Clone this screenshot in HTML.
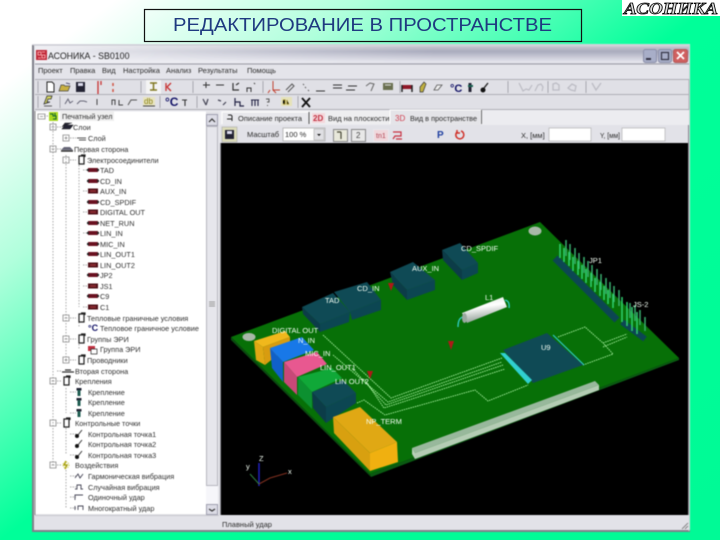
<!DOCTYPE html>
<html><head><meta charset="utf-8"><style>
html,body{margin:0;padding:0;width:720px;height:540px;overflow:hidden}
body{background:linear-gradient(to bottom right,#fff 0%,#fff 8%,#b0ffdc 25%,#00ff99 50%,#00fa96 100%)}
svg{position:absolute;left:0;top:0;display:block}
text{font-family:"Liberation Sans",sans-serif}
.m{font-size:7.500px;fill:#2c2c2c}
.tr{font-size:7.300px;fill:#303030}
.l{font-size:7.500px;fill:#f4fff4}
.s{stroke:#a8a8b0;stroke-width:1}
</style></head><body>
<svg width="720" height="540" viewBox="0 0 720 540" xmlns="http://www.w3.org/2000/svg">
<defs>
<linearGradient id="tb" x1="0" y1="0" x2="0" y2="1"><stop offset="0" stop-color="#c8c8d0"/><stop offset=".3" stop-color="#a9abbd"/><stop offset=".9" stop-color="#e6e6ee"/><stop offset="1" stop-color="#d0d0d8"/></linearGradient>
<linearGradient id="tl" x1="0" y1="0" x2="1" y2="0"><stop offset="0" stop-color="#f2f2f6" stop-opacity=".95"/><stop offset=".6" stop-color="#f2f2f6" stop-opacity=".35"/><stop offset="1" stop-color="#f2f2f6" stop-opacity="0"/></linearGradient>
<linearGradient id="cy" x1="0" y1="0" x2=".25" y2="1"><stop offset="0" stop-color="#d8e2d8"/><stop offset=".45" stop-color="#fff"/><stop offset="1" stop-color="#8e9c94"/></linearGradient>
<g id="cn"><rect x="0" y="-2" width="10" height="4" fill="#6a1020"/><rect x="-1" y="-1" width="2" height="2" fill="#222"/><rect x="9" y="-1" width="2" height="2" fill="#222"/></g>
<g id="cm"><rect x="0" y="-2.500" width="10" height="5" fill="#501018"/><rect x="2" y="-1" width="6" height="2" fill="#8a2a30"/></g>
<g id="fx"><path d="M0 -4h5v8H0zM2 -5h4v2" fill="#fff" stroke="#222" stroke-width="1.200"/></g>
<g id="sc"><rect x="-2.500" y="-4" width="5" height="2.500" fill="#223"/><rect x="-1.500" y="-2" width="3" height="6" fill="#1e5c50"/></g>
<g id="pt"><circle cx="-2" cy="2" r="2" fill="#111"/><path d="M-1 1L3 -4" stroke="#333" fill="none"/></g>
</defs>

<!-- Title -->
<g style="filter:blur(.25px)">
<rect x="144.500" y="9.500" width="437" height="32" fill="none" stroke="#111" stroke-width="1.200"/>
<text x="173" y="31" font-size="18" fill="#1f3a80" textLength="379" lengthAdjust="spacingAndGlyphs">РЕДАКТИРОВАНИЕ В ПРОСТРАНСТВЕ</text>
</g>

<!-- Logo -->
<rect x="622" y="0" width="98" height="16" fill="#fff"/>
<text x="624" y="14" font-size="17" font-weight="bold" font-style="italic" textLength="94" lengthAdjust="spacingAndGlyphs" style="font-family:'Liberation Serif',serif" fill="#ddd" stroke="#000" stroke-width=".8">АСОНИКА</text>

<g style="filter:blur(.45px)">
<!-- Window -->
<rect x="32" y="44" width="658" height="488" fill="#e3e3e8"/>
<path d="M33 45V531H690" fill="none" stroke="#80808a" stroke-width="2"/>
<path d="M33 45H689V531" fill="none" stroke="#c8c8d0" stroke-width="1"/>
<rect x="35" y="46" width="654" height="18" fill="url(#tb)"/>
<rect x="35" y="46" width="400" height="18" fill="url(#tl)"/>
<rect x="36" y="50" width="11" height="10" fill="#c02838"/><path d="M38 52h3v3h-3zM42 52h3M42 55h3v3h-3zM38 58h3" stroke="#fbb" stroke-width=".8" fill="none"/>
<text x="48" y="59" font-size="8.800" fill="#222">АСОНИКА - SB0100</text>
<rect x="643.500" y="49.500" width="13" height="13" rx="2" fill="#a8aec8" stroke="#8a8ea8"/><rect x="646" y="58" width="5" height="2" fill="#334"/>
<rect x="658.500" y="49.500" width="13" height="13" rx="2" fill="#a8aec8" stroke="#8a8ea8"/><rect x="661.500" y="52.500" width="7" height="7" fill="none" stroke="#334" stroke-width="1.200"/>
<rect x="673.500" y="49.500" width="14" height="13" rx="2" fill="#d06060" stroke="#b05858"/><path d="M677 52l7 7M684 52l-7 7" stroke="#fff" stroke-width="1.800"/>

<!-- Menu -->
<rect x="35" y="64" width="654" height="15" fill="#e4e4ea"/>
<path d="M35 64H689" stroke="#9a9aa4"/>
<text x="38" y="73" class="m">Проект</text><text x="70" y="73" class="m">Правка</text><text x="102" y="73" class="m">Вид</text><text x="123" y="73" class="m">Настройка</text><text x="166" y="73" class="m">Анализ</text><text x="198" y="73" class="m">Результаты</text><text x="247" y="73" class="m">Помощь</text>

<!-- Toolbars -->
<rect x="35" y="79" width="654" height="31" fill="#e0e0e6"/>
<path d="M35 79.500H689M35 94.500H689M35 109.500H689" stroke="#aeaeb6"/>
<path d="M689 79V110" stroke="#aeaeb6"/>
<path d="M38 81V93M141 81V93M193 81V93M263 81V93M400 81V93M508 81V93M548 81V93M586 81V93M38 96V108M60 96V108M160 96V108M197 96V108M298 96V108" class="s" fill="none"/>
<path d="M47 82h5l2 2v8h-7z" fill="#fff" stroke="#222"/>
<path d="M59 91l2-6h3l1 1h5l-2 5z" fill="#c8b040" stroke="#444" stroke-width=".7"/><path d="M66 83l4 1" stroke="#557" stroke-width="1"/>
<rect x="76" y="82" width="9" height="10" fill="#223"/><rect x="78" y="83" width="5" height="3" fill="#dde"/>
<path d="M98 81v13M101 81v4" stroke="#c83030" stroke-width="1.300"/><path d="M113 83v3M113 89v3" stroke="#d05040" stroke-width="1.500"/>
<rect x="146" y="80" width="15" height="14" fill="#f4f4f4"/><path d="M150 83h7M153.500 83v7M150 90h7" stroke="#807820" stroke-width="1.500"/>
<path d="M166 83v8M167 87l4-4M167 87l4 4" stroke="#c83030" stroke-width="1.300"/>
<path d="M203 85h7M206 82v6M216 85h8" stroke="#333" stroke-width="1"/>
<path d="M233 83v7h6M236 85l3-2" stroke="#333" stroke-width="1.200" fill="none"/><path d="M247 92v-4h4v4M254 83l1 1" stroke="#333" fill="none"/>
<path d="M273 81v9h7M270 90l-2 3M273 90l3 3" stroke="#c04030" stroke-width="1" fill="none"/>
<path d="M286 90l6-6 2 2-6 6M303 84l1 1M305 87l1 1M308 90l1 1" stroke="#555" stroke-width="1" fill="none"/>
<path d="M316 91h9M333 85h9M333 88h9M348 86h9M346 90h9" stroke="#333" stroke-width="1"/>
<path d="M366 86l4-3 4 1-3 7" stroke="#666" fill="none"/><rect x="383" y="83" width="10" height="7" fill="#6a7050"/><path d="M385 85h6" stroke="#ddd"/>
<rect x="402" y="85" width="10" height="4" fill="#901828"/><path d="M402 85v7M412 85v7" stroke="#222" stroke-width="1.500"/>
<path d="M420 92v-5l4-5 2 2-3 8z" fill="#c0b040" stroke="#333" stroke-width=".7"/><path d="M434 90l3-5h5l-4 5z" fill="#eee" stroke="#555" stroke-width=".8"/>
<text x="450" y="92" font-size="11" font-weight="bold" fill="#116">°C</text>
<path d="M470 83v9" stroke="#223" stroke-width="3"/><path d="M468 86h5" stroke="#186050" stroke-width="2"/>
<circle cx="483" cy="90" r="2.500" fill="#111"/><path d="M484 88l4-5" stroke="#222" stroke-width="1.400"/>
<path d="M519 83l4 8 3-2 3 1 3-5M535 91l3-6 3-1 2 3-1 4" stroke="#bcbcc4" stroke-width="1.200" fill="none"/>
<path d="M553 90v-6l3-1 3 2v5zM568 88l4-4 4 2-1 5-4-1zM592 83l4 7 5-7" stroke="#bcbcc4" stroke-width="1.300" fill="none"/>

<path d="M44 104l3-8h5l-1 3h-3l-1 3h3zM44 106h8" fill="#d8d860" stroke="#333" stroke-width=".8"/>
<path d="M65 104l3-5 2 4 3-2M77 104l3-3h4l3 1" stroke="#667" stroke-width="1" fill="none"/><path d="M97 99v6M112 105v-5h3v5M119 100v5h4" stroke="#444" stroke-width="1" fill="none"/>
<path d="M128 105l3-5h6" stroke="#555" fill="none"/>
<rect x="143" y="97" width="12" height="9" fill="#e8e4c0"/><text x="144" y="104" font-size="8" fill="#888010">db</text><path d="M143 106h12" stroke="#444"/>
<text x="165" y="106" font-size="12" font-weight="bold" fill="#116">°C</text><path d="M182 100h5M185 100v6" stroke="#333" stroke-width="1.100"/>
<path d="M203 99l3 6M208 99l-2 6M218 100l3 1M223 105l3-3" stroke="#445" stroke-width="1.200" fill="none"/>
<path d="M235 98v8M235 102h5v4h4" stroke="#224" stroke-width="1.200" fill="none"/><path d="M251 100h8M252 100v6M255 100v6M258 100v6" stroke="#224" stroke-width="1.100" fill="none"/>
<path d="M266 99h3v3h-2M267.500 105v1" stroke="#555" fill="none"/>
<rect x="281" y="97" width="11" height="9" fill="#e6e2b8"/><path d="M283 100h2v4h-2M287 100v4h2" stroke="#908020"/>
<path d="M302 98l8 9M310 98l-8 9" stroke="#111" stroke-width="1.800"/>

<!-- Tree -->
<rect x="35" y="111" width="171" height="403" fill="#fff"/>
<path d="M35 111H219V515" fill="none" stroke="#e8e8ee"/>
<path d="M35 111V515" stroke="#888"/>
<!-- scrollbar -->
<rect x="206" y="114" width="12" height="401" fill="#f6f6fa"/>
<rect x="206.500" y="114.500" width="11" height="11" fill="#dcdce6" stroke="#a0a0b0"/><path d="M209 122l3-3 3 3" stroke="#333" stroke-width="1.200" fill="none"/>
<rect x="206.500" y="126.500" width="11" height="359" fill="#e6e6ec" stroke="#b8b8c0"/>
<path d="M209 302h6M209 304h6M209 306h6" stroke="#999"/>
<rect x="206.500" y="504.500" width="11" height="10" fill="#dcdce6" stroke="#a0a0b0"/><path d="M209 509l3 2 3-2" stroke="#333" stroke-width="1.200" fill="none"/>
<!-- dotted tree lines -->
<path d="M53 122V465M66 155V360M79 165V307M66 388V413M66 428V455M66 470V508M79 322V328M79 344V350" stroke="#aaa" stroke-dasharray="1.500 1.500" fill="none"/>
<path d="M44 116H48M57 127H62M70 138H76M57 149H62M70 160H76M83 170H87M83 191H87M83 212H87M83 233H87M83 265H87M83 286H87M83 307H87M70 318H76M70 339H76M70 360H76M57 371H62M57 381H62M70 392H76M70 413H76M57 423H62M70 434H76M70 455H76M57 465H62M70 476H76M70 487H76M70 497H76M70 508H76" stroke="#aaa" stroke-dasharray="1.500 1" fill="none"/>
<path d="M38 114h7v5h-7zM40 116.500h3M50 124h6v6h-6zM51.500 127h3M50 146h6v6h-6zM51.500 149h3M63 157h6v6h-6zM63 315h6v6h-6zM64.500 318h3M63 336h6v6h-6zM64.500 339h3M63 357h6v6h-6zM64.500 360h3M66 358.500v3M50 378h6v6h-6zM51.500 381h3M50 420h6v6h-6zM50 462h6v6h-6zM51.500 465h3M63 135h6v6h-6zM64.500 138h3M66 136.500v3" stroke="#888" stroke-width=".8" fill="none"/>
<rect x="49" y="112" width="9" height="9" fill="#a8d820"/><path d="M50 114h3v2h3v3h-3M55 113v3" stroke="#163" stroke-width="1" fill="none"/>
<rect x="60" y="111" width="54" height="10" fill="#eeeeee"/>
<path d="M62 129l3-4h8l-3 4zM62 127l3-4h7" fill="#223" stroke="#222" stroke-width=".6"/>
<path d="M77 138h9M79 140h7" stroke="#555"/>
<path d="M61 150l3-3h6l3 3z" fill="#667"/><path d="M61 151h12" stroke="#222" stroke-width="1.400"/>
<use href="#fx" x="79" y="160"/><use href="#fx" x="79" y="318"/><use href="#fx" x="79" y="339"/><use href="#fx" x="79" y="360"/><use href="#fx" x="64" y="381"/><use href="#fx" x="64" y="423"/>
<use href="#cn" x="88" y="170"/><use href="#cn" x="88" y="181"/><use href="#cm" x="88" y="191"/><use href="#cn" x="88" y="202"/><use href="#cm" x="88" y="212"/><use href="#cn" x="88" y="223"/><use href="#cn" x="88" y="233"/><use href="#cn" x="88" y="244"/><use href="#cn" x="88" y="254"/><use href="#cm" x="88" y="265"/><use href="#cn" x="88" y="275"/><use href="#cm" x="88" y="286"/><use href="#cn" x="88" y="296"/><use href="#cm" x="88" y="307"/>
<text x="88" y="331" font-size="9" font-weight="bold" fill="#116">°C</text>
<rect x="88" y="346" width="7" height="5" fill="#c03040"/><rect x="91" y="349" width="6" height="5" fill="#fff" stroke="#222" stroke-width=".7"/>
<path d="M62 372h12M65 370h6" stroke="#333" stroke-width="1.200"/>
<use href="#sc" x="79" y="392"/><use href="#sc" x="79" y="402"/><use href="#sc" x="79" y="413"/>
<use href="#pt" x="79" y="434"/><use href="#pt" x="79" y="444"/><use href="#pt" x="79" y="455"/>
<path d="M66 461l-2 4h3l-2 4" stroke="#a8a010" stroke-width="1.500" fill="none"/><circle cx="66" cy="465" r="3" fill="none" stroke="#c8c840" stroke-dasharray="1 1"/>
<path d="M75 478l3-4 2 4 3-4M75 489h2v-4h4v4h2M75 500v-5h8M75 510v-4M78 510v-4h5v4" stroke="#445" stroke-width=".9" fill="none"/>

<text x="62" y="119" class="tr">Печатный узел</text>
<text x="73" y="130" class="tr">Слои</text>
<text x="88" y="141" class="tr">Слой</text>
<text x="74" y="152" class="tr">Первая сторона</text>
<text x="87" y="163" class="tr">Электросоединители</text>
<text x="100" y="173" class="tr">TAD</text>
<text x="100" y="184" class="tr">CD_IN</text>
<text x="100" y="194" class="tr">AUX_IN</text>
<text x="100" y="205" class="tr">CD_SPDIF</text>
<text x="100" y="215" class="tr">DIGITAL OUT</text>
<text x="100" y="226" class="tr">NET_RUN</text>
<text x="100" y="236" class="tr">LIN_IN</text>
<text x="100" y="247" class="tr">MIC_IN</text>
<text x="100" y="257" class="tr">LIN_OUT1</text>
<text x="100" y="268" class="tr">LIN_OUT2</text>
<text x="100" y="278" class="tr">JP2</text>
<text x="100" y="289" class="tr">JS1</text>
<text x="100" y="299" class="tr">C9</text>
<text x="100" y="310" class="tr">C1</text>
<text x="87" y="321" class="tr">Тепловые граничные условия</text>
<text x="100" y="331" class="tr">Тепловое граничное условие</text>
<text x="87" y="342" class="tr">Группы ЭРИ</text>
<text x="100" y="352" class="tr">Группа ЭРИ</text>
<text x="87" y="363" class="tr">Проводники</text>
<text x="75" y="374" class="tr">Вторая сторона</text>
<text x="75" y="384" class="tr">Крепления</text>
<text x="88" y="395" class="tr">Крепление</text>
<text x="88" y="405" class="tr">Крепление</text>
<text x="88" y="416" class="tr">Крепление</text>
<text x="75" y="426" class="tr">Контрольные точки</text>
<text x="88" y="437" class="tr">Контрольная точка1</text>
<text x="88" y="447" class="tr">Контрольная точка2</text>
<text x="88" y="458" class="tr">Контрольная точка3</text>
<text x="75" y="468" class="tr">Воздействия</text>
<text x="88" y="479" class="tr">Гармоническая вибрация</text>
<text x="88" y="490" class="tr">Случайная вибрация</text>
<text x="88" y="500" class="tr">Одиночный удар</text>
<text x="88" y="511" class="tr">Многократный удар</text>

<!-- Tabs -->
<rect x="220" y="110" width="469" height="15" fill="#ececf0"/>
<rect x="222" y="112" width="87" height="13" fill="#e8e8ec"/>
<path d="M222 124V112H309V124" stroke="#fff" fill="none"/><path d="M309 112V124" stroke="#555"/>
<rect x="310" y="111" width="80" height="13" fill="#eeeef0"/>
<rect x="312" y="113" width="13" height="10" fill="#f4d8dc"/>
<rect x="390" y="110" width="91" height="15" fill="#e4e4e8"/>
<path d="M390 124V110H481V124" stroke="#fff" fill="none"/><path d="M481.500 110V124" stroke="#666"/>
<path d="M227 119h5M228 115h3l1 1v5" stroke="#222" fill="none"/>
<text x="238" y="121" class="m">Описание проекта</text>
<text x="313" y="121" font-size="8" font-weight="bold" fill="#c03040">2D</text>
<text x="328" y="121" class="m">Вид на плоскости</text>
<text x="395" y="121" font-size="8" fill="#d04050">3D</text>
<text x="410" y="121" class="m" textLength="67" lengthAdjust="spacingAndGlyphs">Вид в пространстве</text>

<!-- Tool row -->
<rect x="220" y="125" width="469" height="18" fill="#e2e2e8"/>
<rect x="222" y="127" width="15" height="15" fill="#dcdcb8" stroke="#aaa" stroke-width=".6"/>
<rect x="225" y="130" width="9" height="9" fill="#223"/><rect x="227" y="131" width="5" height="3" fill="#dde"/>
<text x="247" y="137" class="m">Масштаб</text>
<rect x="283" y="128" width="42" height="13" fill="#fff" stroke="#999" stroke-width=".6"/>
<text x="285" y="137" class="m">100 %</text>
<rect x="314" y="129" width="10" height="11" fill="#e0e0e4" stroke="#aaa" stroke-width=".6"/><path d="M317 134h4l-2 2z" fill="#111"/>
<rect x="333.500" y="129.500" width="14" height="12" fill="#e8e8da" stroke="#888"/><path d="M341 132v7M337 132h4" stroke="#443" stroke-width="1.200"/>
<rect x="351.500" y="129.500" width="14" height="12" fill="#e8e8e8" stroke="#888"/><text x="356" y="138" font-size="8" fill="#444">2</text>
<rect x="373.500" y="129.500" width="15" height="12" fill="#f0d8dc" stroke="#e8e8ee"/><text x="376" y="138" font-size="7" fill="#b04050">tn1</text>
<path d="M393 132h8v4h-6l-2 3M396 139h6" stroke="#c83040" stroke-width="1.200" fill="none"/>
<text x="437" y="138" font-size="10" font-weight="bold" fill="#2040a0">P</text>
<path d="M461 131a4 4 0 1 1-4 1M457 130v3h3" stroke="#d03028" stroke-width="1.500" fill="none"/>
<text x="521" y="138" class="m">X, [мм]</text>
<rect x="549" y="128" width="42" height="13" fill="#fff" stroke="#999" stroke-width=".5"/>
<text x="600" y="138" class="m" textLength="20" lengthAdjust="spacingAndGlyphs">Y, [мм]</text>
<rect x="622" y="128" width="43" height="13" fill="#fff" stroke="#999" stroke-width=".5"/>

<!-- Viewport -->
<rect x="221" y="143" width="467" height="373" fill="#000"/>
<path d="M220.500 143V516.500H688.500V125" stroke="#8a8a92" fill="none"/>

<!-- Board -->
<path d="M231 337L370 474L371 477L231 340z" fill="#0a4c10"/>
<path d="M370 474L679 358L679 360L371 477z" fill="#0a5a12"/>
<polygon points="231,337 540,222 679,358 370,474" fill="#077007"/>
<ellipse cx="249" cy="337" rx="6.500" ry="4" fill="#a8b8a8"/>
<ellipse cx="535" cy="231" rx="6.500" ry="4.500" fill="#a8b8a8"/>

<!-- traces -->
<g fill="none" stroke="#b8ffb0" stroke-width=".8" stroke-dasharray="1.500 .8">
<path d="M323 335L391 398L502 358"/><path d="M333 355L388 402L502 362"/><path d="M352 368L386 405L503 365"/><path d="M365 380L384 408L505 369"/>
<path d="M357 403L364 400L385 415L475 390L488 401L528 385"/>
<path d="M558 337L585 327L603 343L627 334"/><path d="M603 347L627 337"/><path d="M583 365L613 354L603 343"/>
</g>

<!-- edge connector -->
<polygon points="412,448 595,381 599,385 415,453" fill="#98b89c"/>
<polygon points="412,448 415,453 415,459 412,454" fill="#b8d0b8"/>
<polygon points="415,453 599,385 599,390 415,459" fill="#b4ccb4"/>

<!-- dark blocks -->
<g>
<polygon points="302,307 333,293 350,312 320,324" fill="#0f4a55"/><polygon points="302,307 320,324 320,332 303,314" fill="#0c3c48"/><polygon points="320,324 350,312 349,322 320,332" fill="#0c4652"/>
<polygon points="334,292 367,282 381,300 350,312" fill="#0f4a55"/><polygon points="350,312 381,300 381,310 352,320" fill="#0c4652"/>
<polygon points="390,272 413,262 435,280 407,290" fill="#0f4a55"/><polygon points="390,272 407,290 407,300 393,285" fill="#0c3c48"/><polygon points="407,290 435,280 435,290 407,300" fill="#0c4652"/>
<polygon points="442,250 460,243 478,263 462,270" fill="#0f4a55"/><polygon points="442,250 462,270 462,280 443,260" fill="#0c3c48"/><polygon points="462,270 478,263 478,273 462,280" fill="#0c4652"/>
</g>
<!-- colored connectors -->
<polygon points="254,341 285,331 290,337 263,347" fill="#f0b81c"/><polygon points="254,341 263,347 265,365 256,360" fill="#e0a814"/><polygon points="263,347 290,337 290,345 265,365" fill="#d89c10"/>
<polygon points="270,348 302,337 314,350 283,362" fill="#1878e8"/><polygon points="270,348 283,362 283,382 272,368" fill="#1060c8"/>
<polygon points="284,362 317,352 327,364 297,377" fill="#e85890"/><polygon points="284,362 297,377 297,395 284,382" fill="#c84878"/>
<polygon points="298,377 332,368 342,378 312,392" fill="#10a838"/><polygon points="298,377 312,392 312,409 298,395" fill="#0c9030"/>
<polygon points="312,392 343,380 356,393 326,407" fill="#0f4a55"/><polygon points="312,392 326,407 326,423 313,408" fill="#0c3c48"/><polygon points="326,407 356,393 356,403 326,423" fill="#0c4652"/>
<polygon points="333,417 360,407 397,442 370,453" fill="#e0a814"/><polygon points="370,453 397,442 398,462 370,471" fill="#f0b010"/><polygon points="333,417 370,453 370,471 334,433" fill="#d8a010"/>

<!-- chip -->
<polygon points="503,350 547,333 583,365 533,383" fill="#0f4a55"/>
<polygon points="500,353 505,353 532,380 528,384" fill="#30d0d0"/>
<path d="M553 335L584 365" stroke="#30c8c8" stroke-width="1.200"/>

<!-- capacitor -->
<path d="M458 327q0-9 5-10M505 300q5 1 4 8" stroke="#30d0c8" stroke-width="1.300" fill="none"/>
<polygon points="462,313 503,297 507,307 467,323" fill="url(#cy)"/>
<ellipse cx="464.500" cy="318" rx="2.500" ry="5" fill="#9aa8a0"/>

<!-- headers -->
<path d="M555 258L617 320" stroke="#0c4652" stroke-width="7"/>
<path d="M622 322L645 339" stroke="#0c4652" stroke-width="6"/>
<g stroke="#3ab070" stroke-width="1.500" fill="none">
<path d="M566 240v16M570 244v16M575 248v16M579 253v16M584 257v16M588 261v16M592 265v16M597 269v16M601 274v16M606 278v16M610 282v16M614 286v16M619 290v16"/>
<path d="M630 303v15M635 305v16M640 310v15M645 317v14"/>
</g>
<g stroke="#30d070" stroke-width="1.500" fill="none">
<path d="M560 244v14M564 248v14M569 252v14M573 257v14M578 261v14M582 265v14M586 269v14M591 273v14M595 278v14M600 282v14M604 286v14M608 290v14M613 294v14"/>
<path d="M622 297v25M627 302v24M632 307v24M637 312v22"/>
</g>

<!-- markers -->
<path d="M388 283h6l-3 8z" fill="#b01818"/><path d="M367 371h6l-3 8z" fill="#b01818"/><path d="M448 341h6l-3 9z" fill="#b01818"/>

<!-- labels -->
<text x="325" y="303" class="l">TAD</text><text x="357" y="291" class="l">CD_IN</text><text x="412" y="271" class="l">AUX_IN</text>
<text x="461" y="251" class="l">CD_SPDIF</text><text x="589" y="263" class="l">JP1</text><text x="633" y="307" class="l">JS-2</text>
<text x="541" y="350" class="l">U9</text><text x="485" y="300" class="l">L1</text>
<text x="272" y="333" class="l">DIGITAL OUT</text><text x="298" y="343" class="l">N_IN</text><text x="305" y="356" class="l">MIC_IN</text>
<text x="320" y="370" class="l">LIN_OUT1</text><text x="335" y="384" class="l">LIN OUT2</text><text x="366" y="424" class="l">NP_TERM</text>

<!-- axes -->
<path d="M259 463V486" stroke="#2020c0" stroke-width="1.500"/><path d="M259 484L270 478L287 473" stroke="#803020" fill="none"/><path d="M259 484L250 474" stroke="#308040"/>
<text x="259" y="461" class="l">Z</text><text x="288" y="474" class="l">x</text><text x="246" y="469" class="l">y</text>

<!-- Status -->
<rect x="35" y="515" width="654" height="15" fill="#e2e2e8"/>
<path d="M35 515.500H219" stroke="#c8c8ce"/>
<text x="222" y="527" class="m">Плавный удар</text>
<path d="M682 529l6-6M685 529l3-3" stroke="#888"/>
</g>
</svg>
</body></html>
